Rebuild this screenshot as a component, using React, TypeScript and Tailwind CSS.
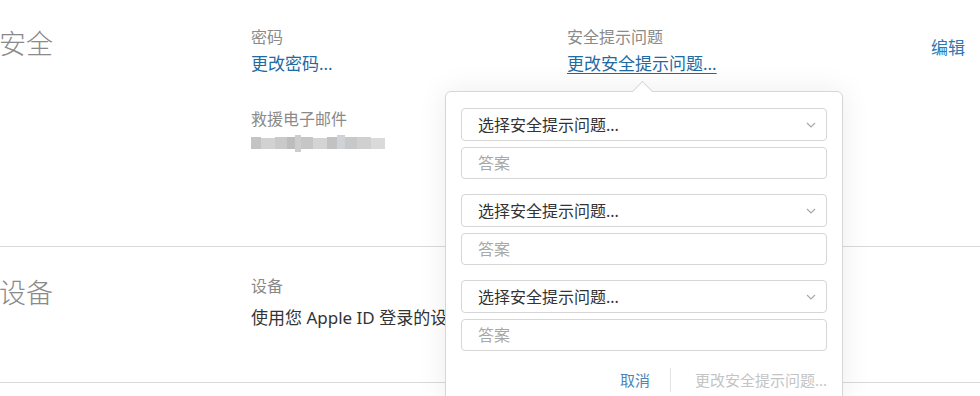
import React from 'react';

const SecurityQuestion: React.FC = () => (
  <div className="flex flex-col gap-[6px]">
    <div className="relative h-[33px] rounded-[4px] border border-[#d6d6d6] bg-white flex items-center pl-4 pr-8">
      <span className="text-[16px] leading-[22px] text-[#333]">选择安全提示问题...</span>
      <svg className="absolute right-[10px] top-[13px]" width="10" height="6" viewBox="0 0 10 6" fill="none">
        <polyline points="1,1 5,5 9,1" stroke="#a8a8a8" strokeWidth="1.2" />
      </svg>
    </div>
    <div className="h-[32px] rounded-[4px] border border-[#d6d6d6] bg-white flex items-center pl-4">
      <span className="text-[16px] leading-[22px] text-[#a8a8a8]">答案</span>
    </div>
  </div>
);

const BlurredEmail: React.FC = () => (
  <div className="flex items-start h-[17px] mt-[5px] blur-[0.6px]">
    <span className="w-[10px] h-[12px] mt-[2px] bg-[#c4c4c4]" />
    <span className="w-[14px] h-[11px] mt-[3px] bg-[#d2d2d2]" />
    <span className="w-[12px] h-[12px] mt-[2px] bg-[#c9c9c9]" />
    <span className="w-[8px] h-[12px] mt-[2px] bg-[#bdbdbd]" />
    <span className="w-[6px] h-[17px] mt-[0px] bg-[#cdcdcd]" />
    <span className="w-[12px] h-[12px] mt-[2px] bg-[#c6c6c6]" />
    <span className="w-[14px] h-[11px] mt-[3px] bg-[#d4d4d4]" />
    <span className="w-[10px] h-[12px] mt-[2px] bg-[#c2c2c2]" />
    <span className="w-[8px] h-[14px] mt-[0px] bg-[#cfd3d8]" />
    <span className="w-[12px] h-[12px] mt-[2px] bg-[#c8c8c8]" />
    <span className="w-[14px] h-[12px] mt-[2px] bg-[#d0d0d0]" />
    <span className="w-[14px] h-[11px] mt-[3px] bg-[#dadada]" />
  </div>
);

export default function App() {
  return (
    <div className="relative w-[980px] h-[396px] overflow-hidden bg-white font-['Noto_Sans','Noto_Sans_CJK_SC',sans-serif]">
      <section className="flex h-[247px] border-b border-[#d9d9d9] pt-[26px]">
        <h2 className="w-[252px] text-[27px] leading-[36px] font-light text-[#8a8a8a] -ml-[1px]">安全</h2>

        <div className="w-[316px]">
          <div className="text-[16px] leading-[22px] text-[#8a8a8a]">密码</div>
          <a className="block mt-1 text-[17px] leading-[24px] text-[#1e6aa3]">更改密码...</a>
          <div className="mt-[32px] text-[16px] leading-[22px] text-[#8a8a8a]">救援电子邮件</div>
          <BlurredEmail />
        </div>

        <div className="relative flex-1">
          <div className="text-[16px] leading-[22px] text-[#8a8a8a]">安全提示问题</div>
          <a className="block mt-1 text-[17px] leading-[24px] text-[#1e6aa3] underline underline-offset-[3px] decoration-1">
            更改安全提示问题...
          </a>

          {/* popover */}
          <div className="absolute z-10 left-[-122px] top-[65px] w-[398px] rounded-[6px] border border-[#d6d6d6] bg-white shadow-[0_0_30px_rgba(0,0,0,0.08)] px-[15px] pt-[16px] pb-[12px]">
            <div className="absolute left-[189px] top-[-8px] w-[15px] h-[15px] rotate-45 bg-white border-l border-t border-[#d6d6d6]" />
            <div className="relative flex flex-col gap-[15px]">
              <SecurityQuestion />
              <SecurityQuestion />
              <SecurityQuestion />
            </div>
            <div className="flex justify-end items-center mt-[17px] text-[15px] leading-[24px]">
              <button className="pr-5 text-[#4b86b9]">取消</button>
              <div className="w-px h-[24px] bg-[#e3e3e3]" />
              <button className="pl-6 text-[#c4c4c4]">更改安全提示问题...</button>
            </div>
          </div>
        </div>

        <a className="pr-[15px] pt-[10px] text-[17px] leading-[24px] text-[#2f78b0]">编辑</a>
      </section>

      <section className="flex h-[136px] border-b border-[#d9d9d9] pt-[28px]">
        <h2 className="w-[252px] text-[27px] leading-[36px] font-light text-[#8a8a8a] -ml-[1px]">设备</h2>
        <div className="flex-1">
          <div className="text-[16px] leading-[22px] text-[#8a8a8a]">设备</div>
          <div className="mt-[9px] text-[17px] leading-[24px] text-[#333]">使用您 Apple ID 登录的设备</div>
        </div>
      </section>
    </div>
  );
}
